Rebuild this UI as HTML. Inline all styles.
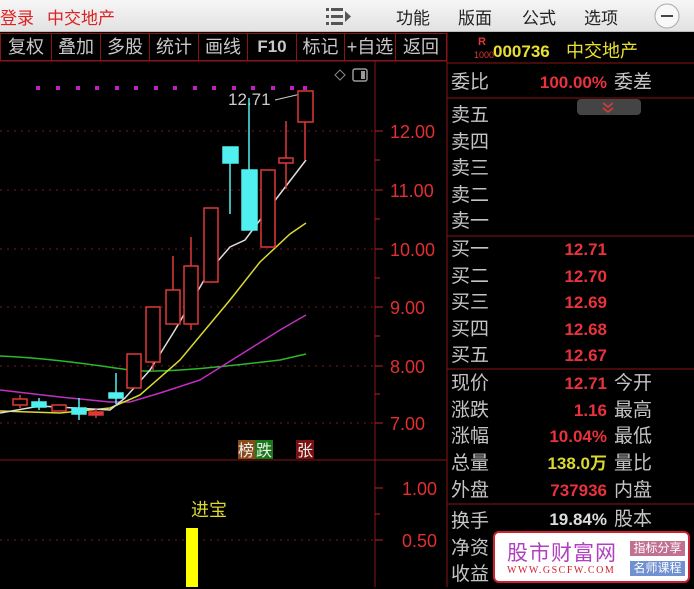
<!DOCTYPE html>
<html><head><meta charset="utf-8"><style>
*{margin:0;padding:0;box-sizing:border-box}
body{width:694px;height:587px;overflow:hidden;background:#000;font-family:"Liberation Sans","Noto Sans CJK SC",sans-serif;position:relative}
.top{position:absolute;left:0;top:0;width:694px;height:32px;background:linear-gradient(#f6f6f6,#e2e2e2);border-bottom:1px solid #bbb}
.top span{position:absolute;top:4px;font-size:17px}
.tb{position:absolute;top:33px;height:28px;border:1px solid #8a1414;color:#c8c8c8;font-size:18px;line-height:26px;text-align:center}
.a{position:absolute;color:#c4c4c4;font-size:19px;line-height:22px}
.v{position:absolute;right:87px;color:#e8323c;font-size:17px;font-weight:bold;line-height:22px;text-align:right}
</style></head><body>
<div class="top">
<span style="left:0;color:#d22">登录</span><span style="left:47px;color:#d22">中交地产</span>
<span style="left:396px;color:#222">功能</span><span style="left:458px;color:#222">版面</span><span style="left:522px;color:#222">公式</span><span style="left:584px;color:#222">选项</span>
<svg style="position:absolute;left:322px;top:6px" width="34" height="20"><g fill="#555"><rect x="4" y="2" width="3" height="3"/><rect x="4" y="9" width="3" height="3"/><rect x="4" y="16" width="3" height="3"/><rect x="9" y="2" width="12" height="3"/><rect x="9" y="9" width="12" height="3"/><rect x="9" y="16" width="12" height="3"/><path d="M23 5l6 5.5-6 5.5z"/></g></svg>
<svg style="position:absolute;left:652px;top:2px" width="30" height="28"><circle cx="15" cy="14" r="12" fill="#f8f8f8" stroke="#aaa"/><rect x="9" y="13" width="12" height="2" fill="#444"/></svg>
</div>
<div class="tb" style="left:0;width:52px">复权</div>
<div class="tb" style="left:51px;width:50px">叠加</div>
<div class="tb" style="left:100px;width:50px">多股</div>
<div class="tb" style="left:149px;width:50px">统计</div>
<div class="tb" style="left:198px;width:50px">画线</div>
<div class="tb" style="left:247px;width:50px;font-weight:bold;font-size:17px">F10</div>
<div class="tb" style="left:296px;width:49px">标记</div>
<div class="tb" style="left:344px;width:52px">+自选</div>
<div class="tb" style="left:395px;width:52px">返回</div>
<svg style="position:absolute;left:0;top:0" width="694" height="587">
<g stroke="#8a1414" fill="none">
<line x1="447" y1="33" x2="447" y2="587"/><line x1="375" y1="61" x2="375" y2="587"/>
<line x1="0" y1="460" x2="447" y2="460"/>
<line x1="447" y1="63" x2="694" y2="63"/><line x1="447" y1="98" x2="694" y2="98"/>
<line x1="447" y1="236" x2="694" y2="236"/><line x1="447" y1="369" x2="694" y2="369"/><line x1="447" y1="504" x2="694" y2="504"/>
<line x1="0" y1="61" x2="447" y2="61"/>
</g>
<g stroke="#7a1a1a" stroke-dasharray="2 5">
<line x1="0" y1="131" x2="375" y2="131"/><line x1="0" y1="190" x2="375" y2="190"/><line x1="0" y1="249" x2="375" y2="249"/><line x1="0" y1="307" x2="375" y2="307"/><line x1="0" y1="366" x2="375" y2="366"/><line x1="0" y1="423" x2="375" y2="423"/><line x1="0" y1="540" x2="375" y2="540"/>
</g>
<g stroke="#b22" stroke-width="1"><path d="M375 131h8M375 190h8M375 249h8M375 307h8M375 366h8M375 423h8M375 160h5M375 219h5M375 278h5M375 336h5M375 394h5M375 488h8M375 540h8M375 514h5"/></g>
<g fill="#e03030" font-size="18" font-family="Liberation Sans">
<text x="390" y="138">12.00</text><text x="390" y="197">11.00</text><text x="390" y="256">10.00</text><text x="390" y="314">9.00</text><text x="390" y="373">8.00</text><text x="390" y="430">7.00</text><text x="402" y="495">1.00</text><text x="402" y="547">0.50</text></g>
<g fill="#c020c0"><rect x="36" y="86" width="4" height="4"/><rect x="56" y="86" width="4" height="4"/><rect x="76" y="86" width="4" height="4"/><rect x="95" y="86" width="4" height="4"/><rect x="115" y="86" width="4" height="4"/><rect x="134" y="86" width="4" height="4"/><rect x="154" y="86" width="4" height="4"/><rect x="173" y="86" width="4" height="4"/><rect x="193" y="86" width="4" height="4"/><rect x="212" y="86" width="4" height="4"/><rect x="232" y="86" width="4" height="4"/><rect x="251" y="86" width="4" height="4"/><rect x="271" y="86" width="4" height="4"/><rect x="290" y="86" width="4" height="4"/><rect x="303" y="86" width="4" height="4"/></g>
<path d="M335 75l5-5 5 5-5 5z" fill="none" stroke="#888"/><rect x="353" y="69" width="14" height="12" rx="2" fill="none" stroke="#999" stroke-width="1.5"/><rect x="361" y="71" width="4" height="8" fill="#999"/>
<text x="228" y="105" fill="#ccc" font-size="17">12.71</text><path d="M275 100l30-7m-6-2l6 2-5 4" stroke="#ccc" fill="none"/>
<g fill="none" stroke-width="1.5">
<path d="M0 356C50 358 100 366 130 370S230 366 280 360L306 354" stroke="#2cb82c"/>
<path d="M0 390L60 397L110 402L130 402L160 393L200 380L240 355L280 330L306 315" stroke="#c030c0"/>
<path d="M0 411L60 413L110 408L140 395L180 360L230 300L260 262L290 234L306 223" stroke="#dada30"/>
<path d="M0 413L40 406L110 410L125 398L150 370L175 330L210 270L230 247L245 240L260 220L306 160" stroke="#ddd"/>
</g>
<g stroke="#e03838" fill="#000" stroke-width="1.5">
<line x1="20" y1="395" x2="20" y2="408"/><rect x="13" y="399" width="14" height="6"/>
<rect x="52" y="405" width="14" height="6"/>
<line x1="96" y1="409" x2="96" y2="418"/><rect x="89" y="412" width="14" height="3" fill="#e03838"/>
<rect x="127" y="354" width="14" height="34"/>
<line x1="153" y1="362" x2="153" y2="370"/><rect x="146" y="307" width="14" height="55"/>
<line x1="173" y1="256" x2="173" y2="290"/><rect x="166" y="290" width="14" height="34"/>
<line x1="191" y1="237" x2="191" y2="330"/><rect x="184" y="266" width="14" height="58"/>
<rect x="204" y="208" width="14" height="74"/>
<rect x="261" y="170" width="14" height="77"/>
<line x1="286" y1="121" x2="286" y2="189"/><rect x="279" y="158" width="14" height="5"/>
<line x1="305" y1="122" x2="305" y2="160"/><rect x="298" y="91" width="15" height="31"/>
</g>
<g stroke="#50f0f0" fill="#50f0f0" stroke-width="1.5">
<line x1="39" y1="398" x2="39" y2="410"/><rect x="32" y="402" width="14" height="5"/>
<line x1="79" y1="398" x2="79" y2="420"/><rect x="72" y="408" width="14" height="6"/>
<line x1="116" y1="373" x2="116" y2="404"/><rect x="109" y="393" width="14" height="5"/>
<line x1="230" y1="160" x2="230" y2="214"/><rect x="223" y="147" width="15" height="16"/>
<line x1="249" y1="98" x2="249" y2="175"/><rect x="242" y="170" width="15" height="60"/>
</g>
<rect x="238" y="440" width="17" height="19" fill="#8a4a1a"/><rect x="255" y="440" width="18" height="19" fill="#1a7a1a"/><rect x="296" y="440" width="18" height="19" fill="#7a1010"/>
<g font-size="16" fill="#eee"><text x="238" y="456">榜</text><text x="256" y="456">跌</text><text x="297" y="456">张</text></g>
<text x="191" y="516" fill="#dada30" font-size="18">进宝</text>
<rect x="186" y="528" width="12" height="59" fill="#ff0"/>
<rect x="577" y="99" width="64" height="16" rx="4" fill="#444"/><path d="M603 103l5 4 5-4M603 108l5 4 5-4" stroke="#e03838" fill="none" stroke-width="1.5"/>
<text x="478" y="45" fill="#e03838" font-size="11" font-weight="bold">R</text><text x="474" y="58" fill="#e03838" font-size="9">1000</text>
<text x="493" y="57" fill="#e8e030" font-size="17" font-weight="bold">000736</text><text x="566" y="57" fill="#e8e030" font-size="18">中交地产</text>
</svg>
<div class="a" style="left:451px;top:72px">委比</div><div class="v" style="top:72px">100.00%</div><div class="a" style="left:614px;top:72px">委差</div>
<div class="a" style="left:451px;top:103px;line-height:26.5px">卖五<br>卖四<br>卖三<br>卖二<br>卖一</div>
<div class="a" style="left:451px;top:237px;line-height:26.5px">买一<br>买二<br>买三<br>买四<br>买五</div>
<div class="v" style="top:237px;line-height:26.5px">12.71<br>12.70<br>12.69<br>12.68<br>12.67</div>
<div class="a" style="left:451px;top:371px;line-height:26.7px">现价<br>涨跌<br>涨幅<br>总量<br>外盘</div>
<div class="v" style="top:371px;line-height:26.7px">12.71<br>1.16<br>10.04%<br><span style="color:#d8d830">138.0万</span><br>737936</div>
<div class="a" style="left:614px;top:371px;line-height:26.7px">今开<br>最高<br>最低<br>量比<br>内盘</div>
<div class="a" style="left:451px;top:509px;line-height:26.5px">换手<br>净资<br>收益</div>
<div class="v" style="top:509px;color:#ddd">19.84%</div><div class="a" style="left:614px;top:509px">股本</div>
<div style="position:absolute;left:493px;top:531px;width:197px;height:52px;background:#fff;border:2px solid #d02030;border-radius:6px">
<div style="position:absolute;left:12px;top:4px;font-size:21px;color:#b040c0;letter-spacing:1px">股市财富网</div>
<div style="position:absolute;left:12px;top:32px;font-size:10px;color:#d02030;font-family:'Liberation Serif',serif;letter-spacing:1.5px">WWW.GSCFW.COM</div>
<div style="position:absolute;left:135px;top:8px;width:55px;height:15px;background:#c07090;color:#fff;font-size:12px;line-height:15px;text-align:center">指标分享</div>
<div style="position:absolute;left:135px;top:28px;width:55px;height:15px;background:#7090d0;color:#fff;font-size:12px;line-height:15px;text-align:center">名师课程</div>
</div>
</body></html>
